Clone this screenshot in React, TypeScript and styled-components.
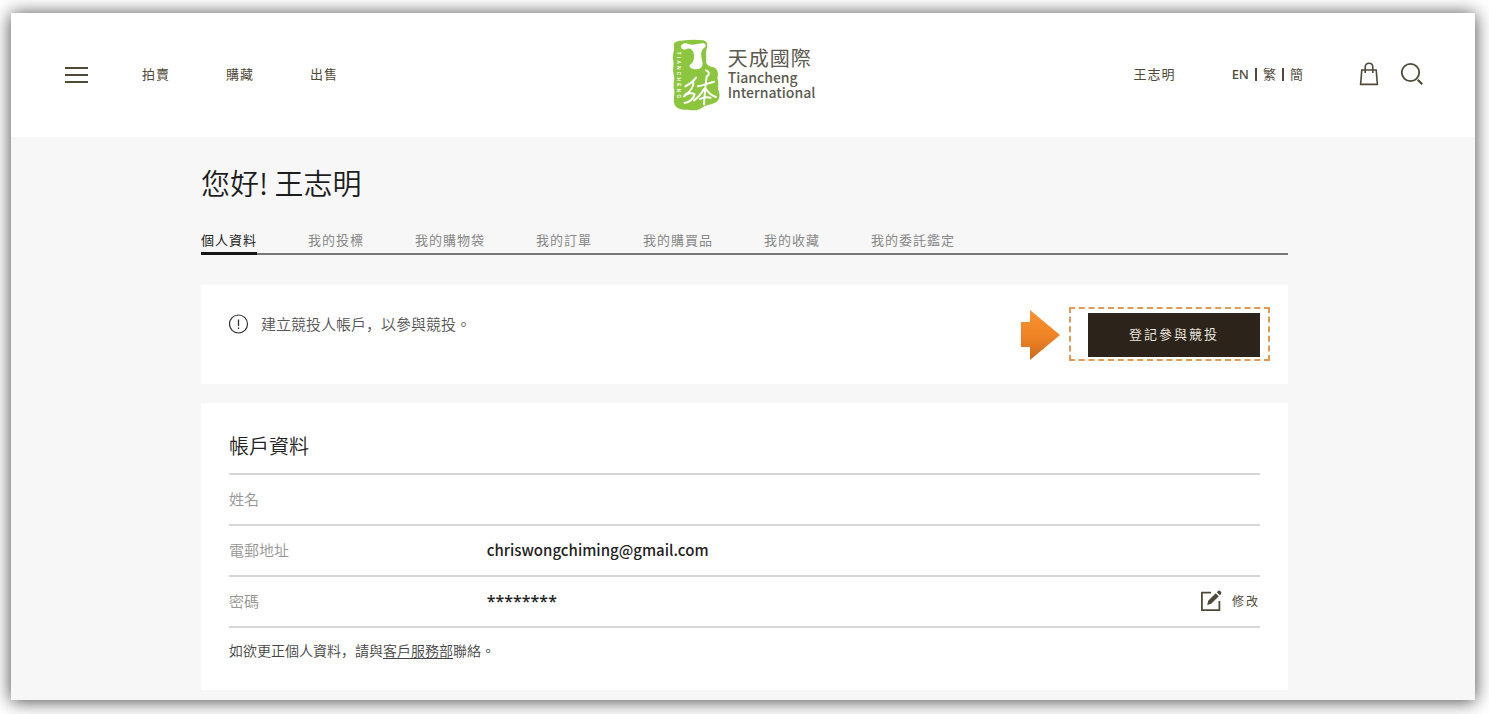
import React from "react";
import styled, { createGlobalStyle } from "styled-components";

const GlobalStyle = createGlobalStyle`
  *, *::before, *::after { box-sizing: border-box; }
  body {
    margin: 0;
    background: #fff;
    color: #222;
    font-family: "Noto Sans", "Noto Sans CJK TC", sans-serif;
  }
`;

const OLIVE = "#4f4a38";

const Frame = styled.div`
  margin: 13px 14px 14px 11px;
  background: #f7f7f7;
  box-shadow: 0 1px 17px rgba(0, 0, 0, 0.75);
`;

const Header = styled.header`
  display: grid;
  grid-template-columns: 1fr auto 1fr;
  align-items: center;
  height: 124px;
  padding: 0 51px 0 52px;
  background: #fff;
`;

const HeaderStart = styled.div`
  display: flex;
  align-items: center;
  gap: 53px;
`;

const IconButton = styled.button`
  display: flex;
  padding: 0;
  border: 0;
  background: none;
  color: ${OLIVE};
  cursor: pointer;
`;

const Nav = styled.nav`
  display: flex;
  gap: 56px;
`;

const NavLink = styled.a`
  padding-bottom: 2px;
  color: ${OLIVE};
  font-family: "Noto Sans CJK TC", sans-serif;
  font-size: 13px;
  line-height: 20px;
  letter-spacing: 1px;
  text-decoration: none;
`;

const Brand = styled.a`
  display: flex;
  align-items: center;
  gap: 8px;
  color: #5c5a4e;
  text-decoration: none;
`;

const BrandName = styled.span`
  display: flex;
  flex-direction: column;
  padding-bottom: 4px;
  font-family: "Noto Sans CJK TC", sans-serif;
  font-size: 14px;
  line-height: 15px;
  font-weight: 500;
`;

const BrandChinese = styled.span`
  font-size: 20px;
  line-height: 24px;
  font-weight: 400;
  letter-spacing: 1px;
`;

const HeaderEnd = styled.div`
  display: flex;
  align-items: center;
  justify-content: flex-end;
  gap: 56px;
`;

const Languages = styled.div`
  display: flex;
  align-items: center;
  gap: 6px;
`;

const LanguageLink = styled(NavLink)`
  letter-spacing: 0;
`;

const EnglishLink = styled(LanguageLink)`
  font-family: "Noto Sans", sans-serif;
  font-weight: 500;
`;

const Divider = styled.span`
  width: 2px;
  height: 13px;
  margin-bottom: 2px;
  background: ${OLIVE};
`;

const Tools = styled.div`
  display: flex;
  align-items: center;
  gap: 21px;
  padding-bottom: 2px;
`;

const Main = styled.main`
  padding: 26px 187px 10px 190px;

  @media (max-width: 1100px) {
    padding: 26px 32px 10px;
  }
`;

const Greeting = styled.h1`
  margin: 0;
  color: #1d1d1d;
  font-family: "Noto Sans CJK TC", sans-serif;
  font-size: 29px;
  line-height: 38px;
  font-weight: 350;
`;

const Tabs = styled.nav`
  display: flex;
  gap: 51px;
  margin-top: 29px;
  border-bottom: 2px solid #777;
`;

const Tab = styled.a<{ $active?: boolean }>`
  margin-bottom: -2px;
  padding-bottom: 2px;
  border-bottom: 3px solid ${(p) => (p.$active ? "#161616" : "transparent")};
  color: ${(p) => (p.$active ? "#222" : "#888")};
  font-family: "Noto Sans CJK TC", sans-serif;
  font-size: 13px;
  line-height: 20px;
  letter-spacing: 1px;
  text-decoration: none;
`;

const Card = styled.section`
  background: #fff;
`;

const NoticeCard = styled(Card)`
  display: flex;
  justify-content: space-between;
  margin-top: 30px;
  padding: 28px 28px 27px;
`;

const Notice = styled.p`
  display: flex;
  align-items: center;
  gap: 12px;
  height: 22px;
  margin: 0;
  color: #555;
  font-family: "Noto Sans CJK TC", sans-serif;
  font-size: 15px;
  line-height: 22px;
  font-weight: 350;
`;

const Comma = styled.span`
  font-family: "Noto Sans CJK SC", sans-serif;
`;

const Action = styled.div`
  position: relative;
`;

const RegisterButton = styled.button`
  display: block;
  width: 172px;
  height: 44px;
  padding: 0 0 3px;
  border: 0;
  background: #2c231a;
  color: #e8e4dd;
  font-family: "Noto Sans CJK TC", sans-serif;
  font-size: 13px;
  line-height: 20px;
  letter-spacing: 2px;
  cursor: pointer;
`;

const Highlight = styled.span`
  position: absolute;
  inset: -6px -10px -4px -19px;
  border: 2px dashed #e09a52;
  pointer-events: none;
`;

const Pointer = styled.svg`
  position: absolute;
  top: -4px;
  right: 200px;
`;

const AccountCard = styled(Card)`
  margin-top: 19px;
  padding: 28px 28px 27px;
`;

const CardTitle = styled.h2`
  margin: 0 0 12px;
  color: #222;
  font-family: "Noto Sans CJK TC", sans-serif;
  font-size: 20px;
  line-height: 30px;
  font-weight: 350;
`;

const Details = styled.table`
  width: 100%;
  border-collapse: collapse;
  border-top: 2px solid #d6d6d6;
  table-layout: fixed;
`;

const Row = styled.tr`
  height: 51px;
  border-bottom: 2px solid #d6d6d6;
`;

const Label = styled.th`
  width: 25%;
  padding: 0 0 2px;
  color: #959595;
  font-family: "Noto Sans CJK TC", sans-serif;
  font-size: 15px;
  line-height: 22px;
  font-weight: 350;
  text-align: left;
`;

const Value = styled.td`
  padding: 0 0 2px;
  color: #222;
  font-family: "Noto Sans CJK TC", sans-serif;
  font-size: 15px;
  line-height: 22px;
  font-weight: 500;
`;

const MaskedValue = styled(Value)`
  font-family: "Noto Sans", sans-serif;
  font-size: 16px;
`;

const ActionCell = styled.td`
  width: 60px;
  padding: 0 0 2px;
`;

const EditButton = styled(IconButton)`
  align-items: center;
  gap: 10px;
  font-family: "Noto Sans CJK TC", sans-serif;
  font-size: 12px;
  line-height: 20px;
  letter-spacing: 2px;
`;

const Footnote = styled.p`
  margin: 11px 0 0;
  padding-bottom: 2px;
  color: #444;
  font-family: "Noto Sans CJK TC", sans-serif;
  font-size: 14px;
  line-height: 22px;
  font-weight: 350;
`;

const InlineLink = styled.a`
  color: inherit;
  text-underline-offset: 2px;
`;

const tabs = ["個人資料", "我的投標", "我的購物袋", "我的訂單", "我的購買品", "我的收藏", "我的委託鑑定"];

const Seal = () => (
  <svg width="48" height="72" viewBox="0 0 144 216" aria-hidden="true">
    <path
      fill="#8cc63f"
      d="M5 16C10 5 24 6 38 4C58 1 76 2 94 4C106 6 108 18 104 30C100 42 104 52 102 66C102 76 110 82 122 84C138 88 140 104 136 118C142 132 136 144 140 156C146 172 142 186 128 192C114 198 100 198 90 206C78 216 60 214 48 212C30 214 10 208 7 194C2 178 10 166 6 150C2 134 10 122 5 106C0 90 8 76 3 60C0 44 10 34 5 16Z"
    />
    <path
      fill="#fff"
      d="M28 19C34 10 44 12 52 16C64 19 76 15 90 13C101 12 105 21 96 27C88 32 86 44 89 58C92 70 94 80 87 86C78 92 64 92 56 86C48 80 54 78 60 72C68 62 68 46 62 36C58 29 52 27 44 30C34 35 24 28 28 19Z"
    />
    <g fill="none" stroke="#fff" strokeLinecap="round" strokeLinejoin="round" strokeWidth="6">
      <path d="M102 94C111 97 114 105 106 112" />
      <path d="M40 142C52 136 64 128 72 116M64 124C66 142 56 158 40 166M36 172C46 162 60 160 68 166C64 180 52 190 38 192" />
      <path d="M78 142C92 140 108 132 126 128M104 112C100 140 98 166 96 196M96 150C88 164 78 176 66 184M102 150C110 162 118 170 132 174M84 180C94 174 106 174 116 176" />
    </g>
    <text transform="translate(16 38) rotate(90)" fill="#fff" fontFamily="Liberation Sans" fontSize="14" fontWeight="700" letterSpacing="7">
      TIANCHENG
    </text>
  </svg>
);

export default function App() {
  return (
    <>
      <GlobalStyle />
      <Frame lang="zh-Hant">
        <Header>
          <HeaderStart>
            <IconButton type="button" aria-label="選單">
              <svg width="26" height="20" viewBox="0 0 26 20" fill="none" stroke="currentColor" strokeWidth="2">
                <path d="M2 3H25M2 10H25M2 17H25" />
              </svg>
            </IconButton>
            <Nav>
              <NavLink href="#auction">拍賣</NavLink>
              <NavLink href="#buy">購藏</NavLink>
              <NavLink href="#sell">出售</NavLink>
            </Nav>
          </HeaderStart>
          <Brand href="#home">
            <Seal />
            <BrandName>
              <BrandChinese>天成國際</BrandChinese>
              <span>Tiancheng</span>
              <span>International</span>
            </BrandName>
          </Brand>
          <HeaderEnd>
            <NavLink href="#account">王志明</NavLink>
            <Languages>
              <EnglishLink href="#en">EN</EnglishLink>
              <Divider />
              <LanguageLink href="#hant">繁</LanguageLink>
              <Divider />
              <LanguageLink href="#hans">簡</LanguageLink>
            </Languages>
            <Tools>
              <IconButton type="button" aria-label="購物袋">
                <svg width="20" height="24" viewBox="0 0 20 24" fill="none" stroke="currentColor" strokeWidth="1.6">
                  <path d="M2.8 8H17.2L18.4 22.4H1.6ZM6.2 11V5.2C6.2 2.8 7.8 1.2 10 1.2S13.8 2.8 13.8 5.2V11" />
                </svg>
              </IconButton>
              <IconButton type="button" aria-label="搜尋">
                <svg width="24" height="24" viewBox="0 0 24 24" fill="none" stroke="currentColor" strokeWidth="1.8">
                  <circle cx="10.5" cy="10.5" r="8.7" />
                  <path d="M17.7 17.7L22.2 22.2" strokeWidth="2.2" />
                </svg>
              </IconButton>
            </Tools>
          </HeaderEnd>
        </Header>
        <Main>
          <Greeting>您好! 王志明</Greeting>
          <Tabs>
            {tabs.map((tab, i) => (
              <Tab key={tab} href={`#tab-${i}`} $active={i === 0}>
                {tab}
              </Tab>
            ))}
          </Tabs>
          <NoticeCard>
            <Notice>
              <svg width="20" height="20" viewBox="0 0 20 20" fill="none" stroke="#333" strokeWidth="1.2" aria-hidden="true">
                <circle cx="9.5" cy="10" r="9" />
                <path d="M9.5 5.5V12M9.5 13.4V15" strokeWidth="1.3" />
              </svg>
              <span>
                建立競投人帳戶<Comma lang="zh-Hans">，</Comma>以參與競投。
              </span>
            </Notice>
            <Action>
              <RegisterButton type="button">登記參與競投</RegisterButton>
              <Highlight />
              <Pointer width="40" height="52" viewBox="0 0 40 52" aria-hidden="true">
                <defs>
                  <linearGradient id="arrow" x1="0" y1="0" x2="0" y2="1">
                    <stop offset="0" stopColor="#f9932f" />
                    <stop offset="0.5" stopColor="#f08426" />
                    <stop offset="1" stopColor="#cf6a1c" />
                  </linearGradient>
                </defs>
                <path fill="url(#arrow)" d="M1 13H10V1L40 26L10 51V38H1Z" />
              </Pointer>
            </Action>
          </NoticeCard>
          <AccountCard>
            <CardTitle>帳戶資料</CardTitle>
            <Details>
              <tbody>
                <Row>
                  <Label scope="row">姓名</Label>
                  <Value />
                  <ActionCell />
                </Row>
                <Row>
                  <Label scope="row">電郵地址</Label>
                  <Value>chriswongchiming@gmail.com</Value>
                  <ActionCell />
                </Row>
                <Row>
                  <Label scope="row">密碼</Label>
                  <MaskedValue>********</MaskedValue>
                  <ActionCell>
                    <EditButton type="button">
                      <svg width="22" height="22" viewBox="0 0 22 22" fill="none" stroke="currentColor" strokeWidth="1.8" aria-hidden="true">
                        <path d="M11 2.6H1.9V20.1H19.4V11" />
                        <path fill="currentColor" stroke="none" d="M7.2 15L8.2 10.8L15.8 3.2L18.8 6.2L11.2 13.8ZM16.8 2.2L17.8 1.2C18.6 .4 19.6 .4 20.4 1.2L20.8 1.6C21.6 2.4 21.6 3.4 20.8 4.2L19.8 5.2Z" />
                      </svg>
                      修改
                    </EditButton>
                  </ActionCell>
                </Row>
              </tbody>
            </Details>
            <Footnote>
              如欲更正個人資料<Comma lang="zh-Hans">，</Comma>請與<InlineLink href="#service">客戶服務部</InlineLink>聯絡。
            </Footnote>
          </AccountCard>
        </Main>
      </Frame>
    </>
  );
}
